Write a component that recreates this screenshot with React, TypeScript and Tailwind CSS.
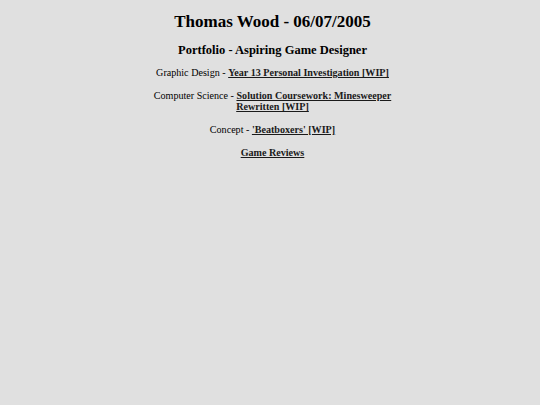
const LINKS = [
  { label: 'Graphic Design', text: 'Year 13 Personal Investigation [WIP]' },
  { label: 'Computer Science', text: 'Solution Coursework: Minesweeper Rewritten [WIP]' },
  { label: 'Concept', text: "'Beatboxers' [WIP]" },
]

export default function App() {
  return (
    <div className="min-h-screen bg-[#e0e0e0] text-black font-['Liberation_Serif','Times_New_Roman',serif] pl-[5px]">
      <div className="mx-auto w-[266px] text-center pt-[11px]">
        <h1 className="text-[17px] font-bold leading-[22px] whitespace-nowrap -mx-10">Thomas Wood - 06/07/2005</h1>
        <h2 className="text-[12.5px] font-bold leading-[16px] mt-[9px] whitespace-nowrap -mx-10">Portfolio - Aspiring Game Designer</h2>
        {LINKS.map((l, i) => (
          <p key={l.label} className={`text-[10.1px] leading-[11.5px] ${i === 0 ? 'mt-[9px]' : 'mt-[11px]'}`}>
            {l.label} - <a href="#" className="font-bold underline text-[#1a1a1a]">{l.text}</a>
          </p>
        ))}
        <p className="text-[10.1px] leading-[11.5px] mt-[11.5px]">
          <a href="#" className="font-bold underline text-[#1a1a1a]">Game Reviews</a>
        </p>
      </div>
    </div>
  )
}
